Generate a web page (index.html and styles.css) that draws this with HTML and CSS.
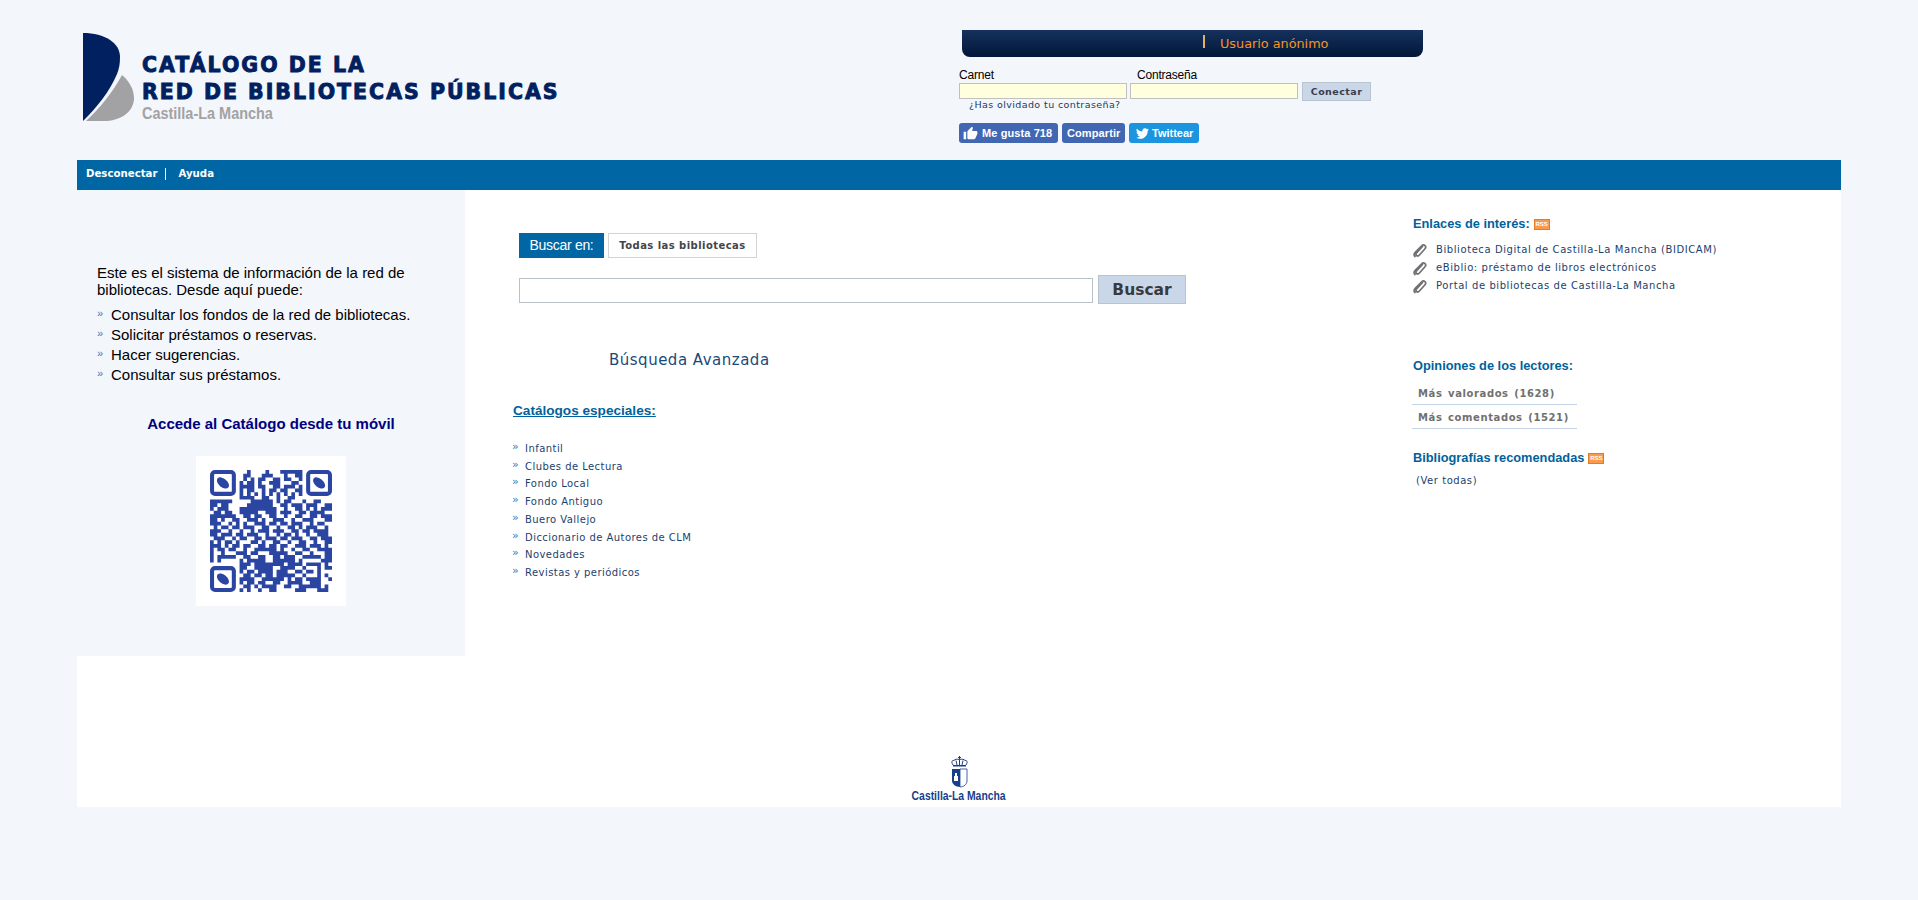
FILE: index.html
```html
<!DOCTYPE html>
<html lang="es">

<head>
    <meta charset="UTF-8">
    <title>Catálogo de la Red de Bibliotecas Públicas de Castilla-La Mancha</title>
    <link rel="stylesheet" href="styles.css">
</head>

<body>
    <div class="page">

        <!-- cabecera -->
        <div class="header">
            <div class="logo">
                <svg class="logo-mark" width="52" height="89" viewBox="0 0 52 89">
                    <path fill="#00205f" d="M0 0C22 0 37 10 37 24C37 31 36 36 34 41C27 58 14 74 0 88Z" />
                    <path fill="#a2a2a4" d="M39 42C46 48 51 56 51 65C51 78 39 87 24 88L3 88C17 75 30 59 39 42Z" />
                </svg>
                <div class="logo-text">
                    <div class="logo-line">CATÁLOGO DE LA</div>
                    <div class="logo-line">RED DE BIBLIOTECAS PÚBLICAS</div>
                    <div class="logo-region">Castilla-La Mancha</div>
                </div>
            </div>

            <div class="login">
                <div class="user-bar">
                    <span class="user-sep"></span>
                    <span class="user-name">Usuario anónimo</span>
                </div>
                <div class="login-labels">
                    <label class="label-carnet">Carnet</label>
                    <label>Contraseña</label>
                </div>
                <div class="login-fields">
                    <input type="text" class="login-input">
                    <input type="password" class="login-input">
                    <button class="login-btn">Conectar</button>
                </div>
                <a class="forgot" href="#">¿Has olvidado tu contraseña?</a>
                <div class="social">
                    <a class="social-btn fb" href="#">
                        <svg width="15" height="15" viewBox="0 0 24 24"><path fill="#fff" d="M1 21h4V9H1v12zm22-11c0-1.1-.9-2-2-2h-6.31l.95-4.57.03-.32c0-.41-.17-.79-.44-1.06L14.17 1 7.59 7.59C7.22 7.95 7 8.45 7 9v10c0 1.1.9 2 2 2h9c.83 0 1.54-.5 1.84-1.22l3.02-7.05c.09-.23.14-.47.14-.73v-2z" /></svg>
                        Me gusta 718
                    </a>
                    <a class="social-btn fb share" href="#">Compartir</a>
                    <a class="social-btn tw" href="#">
                        <svg width="13" height="13" viewBox="0 0 24 24"><path fill="#fff" d="M23.95 4.57a10 10 0 01-2.82.77 4.96 4.96 0 002.16-2.72c-.95.55-2 .95-3.12 1.18a4.92 4.92 0 00-8.38 4.48C7.69 8.1 4.07 6.13 1.64 3.16a4.9 4.9 0 001.52 6.57 4.9 4.9 0 01-2.23-.61v.06a4.92 4.92 0 003.95 4.83 4.9 4.9 0 01-2.21.08 4.93 4.93 0 004.6 3.42A9.87 9.87 0 010 19.54a14 14 0 007.55 2.21c9.06 0 14-7.5 14-14v-.64A10 10 0 0024 4.57z" /></svg>
                        Twittear
                    </a>
                </div>
            </div>
        </div>

        <!-- menu -->
        <div class="nav">
            <a href="#">Desconectar</a>
            <span class="nav-sep"></span>
            <a href="#">Ayuda</a>
        </div>

        <div class="main">
            <div class="columns">

                <!-- columna izquierda -->
                <div class="side">
                    <p class="side-intro">Este es el sistema de información de la red de bibliotecas. Desde aquí puede:</p>
                    <ul class="side-list">
                        <li>Consultar los fondos de la red de bibliotecas.</li>
                        <li>Solicitar préstamos o reservas.</li>
                        <li>Hacer sugerencias.</li>
                        <li>Consultar sus préstamos.</li>
                    </ul>
                    <h3 class="side-mobile">Accede al Catálogo desde tu móvil</h3>
                    <div class="qr">
                        <svg width="122" height="122" viewBox="0 0 33 33">
                            <g fill="none" stroke="#2b45a3" stroke-width="1.1">
                                <rect x=".55" y=".55" width="5.9" height="5.9" rx=".8" />
                                <rect x="26.55" y=".55" width="5.9" height="5.9" rx=".8" />
                                <rect x=".55" y="26.55" width="5.9" height="5.9" rx=".8" />
                            </g>
                            <g fill="#2b45a3">
                                <ellipse cx="3.5" cy="3.5" rx="1.9" ry="1.15" transform="rotate(40 3.5 3.5)" />
                                <ellipse cx="29.5" cy="3.5" rx="1.9" ry="1.15" transform="rotate(40 29.5 3.5)" />
                                <ellipse cx="3.5" cy="29.5" rx="1.9" ry="1.15" transform="rotate(40 3.5 29.5)" />
                            </g>
                            <path transform="translate(0 .5)" fill="none" stroke="#2b45a3" stroke-width="1" d="
                                M10 0h1M15 0h1M19 0h6
                                M9 1h2M14 1h3M20 1h1M23 1h2
                                M9 2h1M11 2h1M13 2h2M17 2h2M20 2h2M24 2h1
                                M8 3h1M10 3h2M13 3h1M16 3h3M22 3h2
                                M8 4h4M13 4h2M17 4h2M20 4h3M24 4h1
                                M8 5h1M10 5h2M14 5h1M16 5h2M19 5h2M23 5h2
                                M8 6h1M10 6h1M12 6h1M14 6h1M16 6h1M18 6h1M20 6h1M22 6h1M24 6h1
                                M8 7h4M14 7h2M18 7h1M21 7h2
                                M0 8h6M11 8h6M18 8h1M20 8h2M25 8h1M28 8h2
                                M0 9h2M3 9h2M10 9h7M19 9h2M22 9h3M26 9h3M31 9h2
                                M0 10h1M2 10h3M8 10h10M20 10h1M23 10h2M26 10h1M28 10h1M30 10h3
                                M1 11h2M4 11h2M8 11h5M15 11h3M19 11h3M24 11h2M27 11h4
                                M0 12h7M9 12h2M12 12h2M16 12h2M20 12h1M23 12h2M27 12h2M30 12h3
                                M0 13h2M3 13h1M6 13h2M10 13h3M14 13h1M17 13h3M22 13h1M25 13h3M31 13h2
                                M0 14h3M5 14h1M7 14h1M9 14h1M12 14h3M16 14h2M19 14h2M22 14h3M27 14h1M29 14h2
                                M1 15h1M3 15h2M6 15h2M9 15h3M14 15h2M18 15h1M21 15h2M24 15h1M26 15h3M31 15h1
                                M0 16h3M5 16h1M8 16h1M11 16h1M13 16h3M17 16h3M22 16h2M25 16h2M28 16h4
                                M0 17h2M3 17h3M7 17h2M10 17h3M15 17h1M18 17h1M20 17h2M23 17h1M26 17h1M29 17h3
                                M1 18h3M6 18h1M8 18h2M12 18h2M15 18h3M19 18h2M22 18h3M27 18h2M30 18h3
                                M0 19h1M2 19h1M4 19h2M7 19h1M11 19h2M14 19h1M17 19h2M21 19h1M24 19h2M28 19h1M31 19h2
                                M0 20h3M4 20h1M6 20h2M9 20h2M13 20h2M16 20h2M19 20h2M23 20h3M27 20h3M31 20h1
                                M0 21h1M2 21h2M5 21h2M9 21h1M12 21h6M19 21h1M22 21h1M25 21h2M29 21h4
                                M0 22h1M3 22h1M7 22h3M11 22h2M16 22h5M23 22h2M27 22h1M31 22h2
                                M0 23h1M2 23h5M9 23h2M13 23h2M17 23h2M20 23h3M25 23h5M31 23h2
                                M0 24h1M2 24h1M8 24h1M10 24h5M17 24h6M24 24h1M30 24h3
                                M8 25h3M12 25h8M21 25h4M26 25h4M31 25h1
                                M8 26h2M12 26h5M19 26h4M25 26h1M29 26h1M31 26h2
                                M8 27h1M10 27h2M13 27h4M18 27h3M23 27h2M26 27h2M29 27h1
                                M9 28h2M12 28h2M15 28h2M18 28h5M25 28h1M29 28h1M31 28h1
                                M8 29h4M14 29h6M21 29h1M23 29h2M26 29h4M32 29h1
                                M8 30h1M10 30h2M13 30h2M17 30h2M21 30h4M27 30h3
                                M9 31h2M12 31h1M14 31h4M20 31h2M24 31h6M31 31h1
                                M8 32h1M10 32h1M13 32h1M16 32h2M23 32h3M29 32h3" />
                        </svg>
                    </div>
                </div>

                <!-- columna central -->
                <div class="center">
                    <div class="search-scope">
                        <span class="scope-label">Buscar en:</span>
                        <span class="scope-value">Todas las bibliotecas</span>
                    </div>
                    <div class="search-row">
                        <input type="text" class="search-input">
                        <button class="search-btn">Buscar</button>
                    </div>
                    <a class="advanced" href="#">Búsqueda Avanzada</a>
                    <a class="special-title" href="#">Catálogos especiales:</a>
                    <ul class="special-list">
                        <li>Infantil</li>
                        <li>Clubes de Lectura</li>
                        <li>Fondo Local</li>
                        <li>Fondo Antiguo</li>
                        <li>Buero Vallejo</li>
                        <li>Diccionario de Autores de CLM</li>
                        <li>Novedades</li>
                        <li>Revistas y periódicos</li>
                    </ul>
                </div>

                <!-- columna derecha -->
                <div class="right">
                    <h4 class="right-title">Enlaces de interés: <span class="rss">RSS</span></h4>
                    <ul class="links">
                        <li>
                            <svg class="clip" width="14" height="15" viewBox="0 0 14 15"><path fill="none" stroke="#6f7174" stroke-width="1.7" stroke-linecap="round" d="M9.5 3.5L3.6 9.8C2.6 11 3 12 3.6 12.5s1.8.6 2.6-.3l5.6-6.2c1.3-1.5 1-2.7.2-3.4s-2.2-.9-3.3.3L2.2 9.4C.8 11 1 12.6 2 13.5" /></svg>
                            Biblioteca Digital de Castilla-La Mancha (BIDICAM)
                        </li>
                        <li>
                            <svg class="clip" width="14" height="15" viewBox="0 0 14 15"><path fill="none" stroke="#6f7174" stroke-width="1.7" stroke-linecap="round" d="M9.5 3.5L3.6 9.8C2.6 11 3 12 3.6 12.5s1.8.6 2.6-.3l5.6-6.2c1.3-1.5 1-2.7.2-3.4s-2.2-.9-3.3.3L2.2 9.4C.8 11 1 12.6 2 13.5" /></svg>
                            eBiblio: préstamo de libros electrónicos
                        </li>
                        <li>
                            <svg class="clip" width="14" height="15" viewBox="0 0 14 15"><path fill="none" stroke="#6f7174" stroke-width="1.7" stroke-linecap="round" d="M9.5 3.5L3.6 9.8C2.6 11 3 12 3.6 12.5s1.8.6 2.6-.3l5.6-6.2c1.3-1.5 1-2.7.2-3.4s-2.2-.9-3.3.3L2.2 9.4C.8 11 1 12.6 2 13.5" /></svg>
                            Portal de bibliotecas de Castilla-La Mancha
                        </li>
                    </ul>
                    <h4 class="right-title opinions">Opiniones de los lectores:</h4>
                    <div class="opinion-row">Más valorados (1628)</div>
                    <div class="opinion-row">Más comentados (1521)</div>
                    <h4 class="right-title biblio">Bibliografías recomendadas <span class="rss">RSS</span></h4>
                    <a class="see-all" href="#">(Ver todas)</a>
                </div>
            </div>

            <!-- pie -->
            <div class="footer">
                <svg width="17" height="32" viewBox="0 0 17 32">
                    <g fill="none" stroke="#173f8a" stroke-width="1">
                        <path d="M8.5 0v3M7 1.5h3" />
                        <path d="M2 9C0 6 1 4 3 4.5C4 3 6 3 8.5 3.5C11 3 13 3 14 4.5C16 4 17 6 15 9" />
                        <path d="M5 4.5L6 9M12 4.5L11 9M8.5 3.5V9" />
                    </g>
                    <path fill="#173f8a" d="M2 9h13v1.5H2z" />
                    <path fill="#173f8a" d="M1 13h8v18C5 31 1 28 1 25z" />
                    <path fill="#fff" stroke="#173f8a" stroke-width=".8" d="M9 13h7v12c0 3-3 6-7 6z" />
                    <path fill="#fff" d="M3 20h4v5H3zM4 17h2v3H4z" />
                </svg>
                <div class="footer-name">Castilla-La Mancha</div>
            </div>
        </div>
    </div>
</body>

</html>
```

FILE: styles.css
```css
/* reset */
* {
    margin: 0;
    padding: 0;
    box-sizing: border-box;
}

body {
    background-color: #f3f6fb;
    font-family: "Liberation Sans", Arial, sans-serif;
    color: #000;
    height: 900px;
    overflow: hidden;
}

a {
    text-decoration: none;
    color: inherit;
}

ul {
    list-style: none;
}

.page {
    width: 1764px;
    margin-left: 77px;
}

/* cabecera */
.header {
    display: flex;
    height: 160px;
}

.logo {
    width: 882px;
    padding: 33px 0 0 6px;
    display: flex;
    gap: 7px;
}

.logo-mark {
    flex: none;
}

.logo-text {
    padding-top: 19px;
    color: #00205f;
}

.logo-line {
    font-family: "DejaVu Sans", sans-serif;
    font-weight: bold;
    font-size: 20.5px;
    line-height: 27px;
    letter-spacing: 2px;
    -webkit-text-stroke: 0.9px #00205f;
    white-space: nowrap;
}

.logo-region {
    font-family: "Liberation Sans", sans-serif;
    font-weight: bold;
    font-size: 17px;
    line-height: 16px;
    color: #a2a2a4;
    transform: scaleX(0.85);
    transform-origin: left;
}

.login {
    width: 482px;
}

.user-bar {
    margin: 30px 0 0 3px;
    width: 461px;
    height: 27px;
    background: linear-gradient(#14325c, #03153a);
    border-radius: 0 0 8px 8px;
    display: flex;
    align-items: center;
    padding-left: 241px;
}

.user-sep {
    width: 2px;
    height: 13px;
    margin-top: -4px;
    background-color: #e6b060;
}

.user-name {
    margin-left: 15px;
    font-family: "DejaVu Sans", sans-serif;
    font-size: 12.8px;
    color: #f7941d;
}

.login-labels {
    display: flex;
    font-size: 12px;
    line-height: 12px;
    margin-top: 12px;
    letter-spacing: -0.2px;
}

.label-carnet {
    width: 178px;
}

.login-fields {
    display: flex;
    align-items: center;
    gap: 3px;
    height: 20px;
}

.login-input {
    width: 168px;
    height: 16px;
    background-color: #ffffdd;
    border: 1px solid #c0c0c0;
}

.login-btn {
    width: 69px;
    height: 19px;
    margin-left: 1px;
    background-color: #c9d7e8;
    border: 1px solid #b8c4d0;
    font-family: "DejaVu Sans", sans-serif;
    font-weight: bold;
    font-size: 9.5px;
    letter-spacing: 0.45px;
    color: #3b3b4f;
}

.forgot {
    display: block;
    margin: -3px 0 0 10px;
    font-family: "DejaVu Sans", sans-serif;
    font-size: 9.5px;
    line-height: 13px;
    color: #1d3a5f;
    letter-spacing: 0.4px;
}

.social {
    display: flex;
    gap: 4px;
    margin-top: 12px;
}

.social-btn {
    display: flex;
    align-items: center;
    height: 20px;
    border-radius: 3px;
    font-weight: bold;
    font-size: 11px;
    color: #fff;
    white-space: nowrap;
}

.fb {
    width: 99px;
    background-color: #4267b2;
    padding-left: 4px;
    gap: 4px;
    letter-spacing: 0.1px;
}

.share {
    width: 63px;
    padding-left: 5px;
}

.tw {
    width: 70px;
    background-color: #1b95e0;
    padding-left: 7px;
    gap: 3px;
}

/* menu */
.nav {
    display: flex;
    align-items: center;
    height: 30px;
    padding: 0 0 3px 9px;
    background-color: #0066a4;
    font-family: "DejaVu Sans", sans-serif;
    font-weight: bold;
    font-size: 10.2px;
    color: #fff;
}

.nav-sep {
    width: 1px;
    height: 12px;
    margin: 0 12px 0 8px;
    background-color: #fff;
}

/* cuerpo */
.main {
    background-color: #fff;
    height: 617px;
}

.columns {
    display: flex;
    height: 466px;
}

.side {
    width: 388px;
    height: 466px;
    background-color: #f3f6fb;
    padding: 74px 0 0 20px;
}

.side-intro {
    font-size: 15px;
    line-height: 17px;
    width: 330px;
}

.side-list {
    margin-top: 7px;
    font-size: 15px;
    line-height: 20px;
}

.side-list li,
.special-list li {
    position: relative;
    padding-left: 14px;
}

.side-list li::before,
.special-list li::before {
    content: "»";
    position: absolute;
    left: 0;
    top: -2px;
    font-size: 11px;
    color: #2f7cc0;
}

.side-mobile {
    margin-top: 30px;
    width: 348px;
    text-align: center;
    font-size: 15px;
    line-height: 17px;
    color: #000080;
}

.qr {
    width: 150px;
    height: 150px;
    margin: 24px 0 0 99px;
    padding: 14px;
    background-color: #fff;
}

.center {
    width: 948px;
    padding: 43px 0 0 49px;
}

.search-scope {
    display: flex;
    gap: 4px;
    margin-left: 5px;
    height: 25px;
}

.scope-label {
    width: 85px;
    background-color: #0066a4;
    color: #fff;
    font-size: 14px;
    line-height: 25px;
    text-align: center;
    letter-spacing: -0.3px;
}

.scope-value {
    width: 149px;
    border: 1px solid #d3d3d3;
    text-align: center;
    font-family: "DejaVu Sans", sans-serif;
    font-weight: bold;
    font-size: 10px;
    letter-spacing: 0.45px;
    line-height: 23px;
    color: #44444a;
}

.search-row {
    display: flex;
    align-items: center;
    gap: 5px;
    margin: 17px 0 0 5px;
    height: 29px;
}

.search-input {
    width: 574px;
    height: 25px;
    margin-top: 2px;
    border: 1px solid #b8c0c8;
    background-color: #fff;
}

.search-btn {
    width: 88px;
    height: 29px;
    background-color: #c9d7e8;
    border: 1px solid #b8c4d0;
    font-family: "DejaVu Sans", sans-serif;
    font-weight: bold;
    font-size: 15.5px;
    color: #3a3a3a;
}

.advanced {
    display: block;
    margin: 46px 0 0 95px;
    font-family: "DejaVu Sans", sans-serif;
    font-size: 15px;
    letter-spacing: 0.5px;
    line-height: 20px;
    color: #1a4a7a;
}

.special-title {
    display: inline-block;
    margin: 32px 0 0 -1px;
    font-weight: bold;
    font-size: 13.6px;
    line-height: 17px;
    color: #00629c;
    text-decoration: underline;
}

.special-list {
    margin: 21px 0 0 -2px;
    font-family: "DejaVu Sans", sans-serif;
    font-size: 10px;
    letter-spacing: 0.45px;
    line-height: 17.7px;
    color: #1c3f6e;
}

.special-list li {
    padding-left: 13px;
}

.special-list li::before {
    font-size: 11px;
}

.right {
    flex: 1;
}

.right-title {
    display: flex;
    align-items: center;
    gap: 4px;
    font-size: 12.8px;
    line-height: 15px;
    color: #00629c;
    white-space: nowrap;
}

.right > .right-title:first-child {
    margin-top: 26px;
}

.rss {
    display: inline-block;
    width: 16px;
    height: 11px;
    margin-top: 1px;
    background-color: #f99b4a;
    border: 1px solid #e67a1e;
    color: #fff;
    font-size: 6px;
    line-height: 9px;
    text-align: center;
}

.links {
    margin-top: 10px;
    font-family: "DejaVu Sans", sans-serif;
    font-size: 10px;
    letter-spacing: 0.58px;
    line-height: 18px;
    color: #1c3f6e;
}

.links li {
    display: flex;
    align-items: center;
    gap: 9px;
    white-space: nowrap;
}

.clip {
    flex: none;
}

.opinions {
    margin-top: 63px;
}

.opinion-row {
    width: 165px;
    height: 24px;
    margin-left: -1px;
    padding-left: 6px;
    border-bottom: 1px solid #c5d3e8;
    font-family: "DejaVu Sans", sans-serif;
    font-weight: bold;
    font-size: 10px;
    letter-spacing: 0.6px;
    word-spacing: 1.5px;
    line-height: 25px;
    color: #707070;
}

.opinion-row:first-of-type {
    margin-top: 8px;
}

.biblio {
    margin-top: 21px;
}

.see-all {
    display: block;
    margin: 8px 0 0 3px;
    font-family: "DejaVu Sans", sans-serif;
    font-size: 10px;
    letter-spacing: 0.55px;
    line-height: 15px;
    color: #1c3f6e;
}

/* pie */
.footer {
    height: 151px;
    padding-top: 100px;
    display: flex;
    flex-direction: column;
    align-items: center;
}

.footer-name {
    font-family: "Liberation Sans", sans-serif;
    font-weight: bold;
    font-size: 12.5px;
    line-height: 13px;
    margin-top: 2px;
    color: #173f8a;
    transform: scaleX(0.83);
}
```
